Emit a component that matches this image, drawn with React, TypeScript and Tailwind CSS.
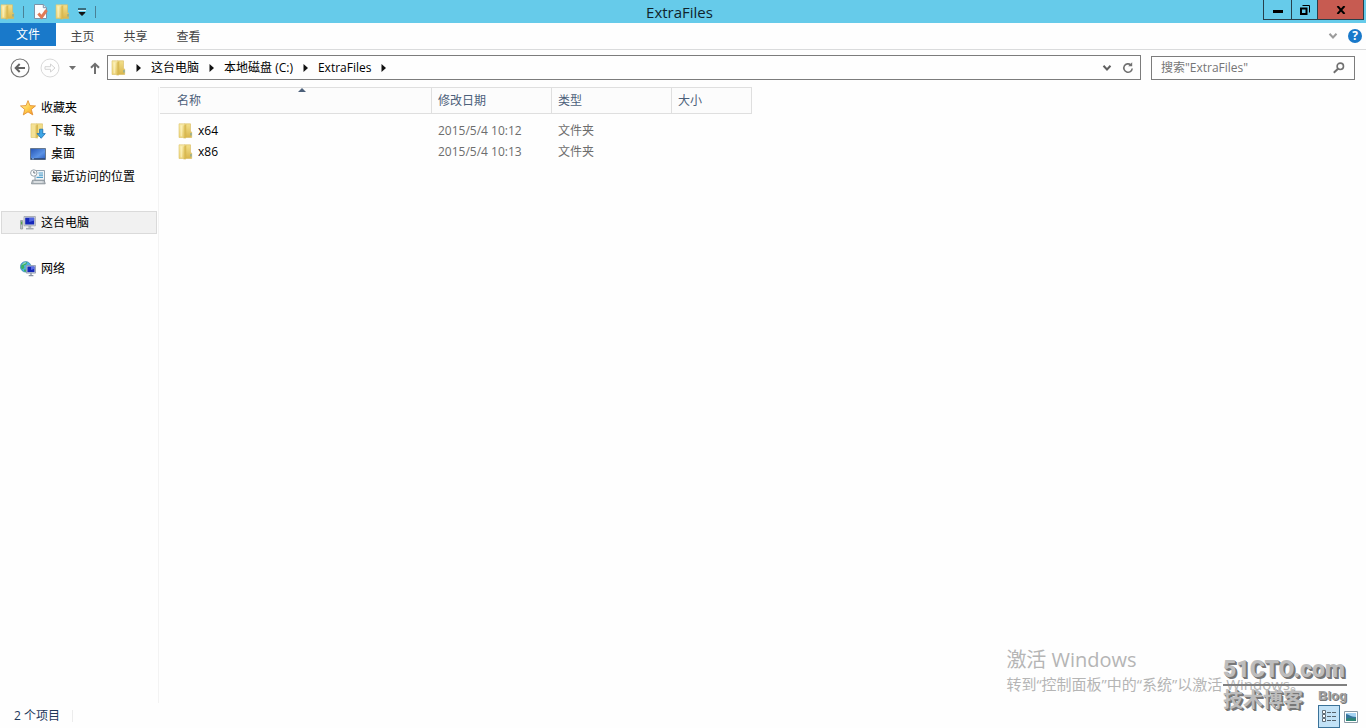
import type { ReactNode } from "react";

/* ---------- icons ---------- */

function FolderIcon({ id }: { id: string }) {
  return (
    <svg width="15" height="16" viewBox="0 0 15 16" aria-hidden="true" className="shrink-0">
      <defs>
        <linearGradient id={`${id}-back`} x1="0" y1="0" x2="0" y2="1">
          <stop offset="0" stopColor="#f8eba8" />
          <stop offset="1" stopColor="#ecd277" />
        </linearGradient>
        <linearGradient id={`${id}-front`} x1="0" y1="0" x2="0" y2="1">
          <stop offset="0" stopColor="#f3e08c" />
          <stop offset="1" stopColor="#d9b64c" />
        </linearGradient>
      </defs>
      <path d="M6 .8h6.500v7.700l1.200.6v5.400H6z" fill={`url(#${id}-front)`} stroke="#d8bb62" strokeWidth=".6" />
      <path d="M1 .8h4.500l2 1v13.400L5.500 14.500H1z" fill={`url(#${id}-back)`} stroke="#dcc26a" strokeWidth=".6" />
      <path d="M5.600 2.400 8.300 1.300v13l-2.700 1.400z" fill="#d3b144" opacity=".65" />
      <path d="M3.300 2.400v11" stroke="#fff6c8" strokeWidth="1.600" opacity=".6" />
      <path d="M13 10v2.600" stroke="#5c9fb5" strokeWidth=".9" />
    </svg>
  );
}

function PropertiesIcon() {
  return (
    <svg width="16" height="17" viewBox="0 0 16 17" aria-hidden="true">
      <path d="M1.500 1.500h8.800l3.200 3.200v10.800h-12z" fill="#fcfdff" stroke="#7d93a8" />
      <path d="M10.300 1.500v3.200h3.200" fill="#dfe8f0" stroke="#7d93a8" />
      <path d="m5.400 10.600 3.200 3.600 5-7" fill="none" stroke="#e07a55" strokeWidth="3" />
    </svg>
  );
}

function StarIcon() {
  return (
    <svg width="16" height="16" viewBox="0 0 16 16" aria-hidden="true">
      <defs>
        <linearGradient id="star" x1="0" y1="0" x2="1" y2="1">
          <stop offset="0" stopColor="#fff3b0" />
          <stop offset=".5" stopColor="#ffd04f" />
          <stop offset="1" stopColor="#f58e22" />
        </linearGradient>
      </defs>
      <path
        d="m8 .6 2 5 5.500.3-4.200 3.500 1.500 5.500L8 11.900l-4.700 3 1.400-5.500L.5 5.900 6 5.600z"
        fill="url(#star)"
        stroke="#e08a2c"
        strokeWidth=".8"
        strokeLinejoin="round"
      />
    </svg>
  );
}

function DownloadsIcon() {
  return (
    <svg width="16" height="16" viewBox="0 0 16 16" aria-hidden="true">
      <path d="M6 .8h6.500v12.500H6z" fill="#f1dc86" stroke="#d8bb62" strokeWidth=".6" />
      <path d="M1 .8h4.500l2 1v13.400L5.500 14.500H1z" fill="#f4e196" stroke="#dcc26a" strokeWidth=".6" />
      <path d="M5.600 2.400 8 1.500v12.600l-2.400 1.400z" fill="#d3b144" opacity=".75" />
      <path d="M9.600 6.200h3.200v4.400h2.500l-4.100 4.700-4.100-4.700h2.500z" fill="#3ea6e6" stroke="#1a6fb4" strokeWidth=".8" />
    </svg>
  );
}

function DesktopIcon() {
  return (
    <svg width="16" height="16" viewBox="0 0 16 16" aria-hidden="true">
      <defs>
        <linearGradient id="desk" x1="0" y1="0" x2="1" y2="1">
          <stop offset="0" stopColor="#2453b5" />
          <stop offset=".6" stopColor="#5b93e6" />
          <stop offset="1" stopColor="#2a5cc0" />
        </linearGradient>
      </defs>
      <path d="M.5 2.500h15v11H.5z" fill="url(#desk)" stroke="#66788e" />
      <path d="M1 12.800h14" stroke="#2c4674" strokeWidth="1.200" />
      <path d="M2 12.800h2" stroke="#8fb9ee" />
    </svg>
  );
}

function RecentIcon() {
  return (
    <svg width="16" height="16" viewBox="0 0 16 16" aria-hidden="true">
      <path d="M5 1.500h9.500v10H5z" fill="#eef3f7" stroke="#8a99a6" strokeWidth=".9" />
      <path d="M8.500 4h4.500M9 6.200h4M6.500 8.400H13" stroke="#4f9fcb" strokeWidth="1.200" />
      <path d="m2.500 11.200-1 3.600h13.700l-1-3.600z" fill="#bfc6cb" stroke="#838c93" strokeWidth=".9" />
      <path d="M4 13h8.500" stroke="#f1f3f4" />
      <circle cx="3.800" cy="4" r="3.200" fill="#fbfcfd" stroke="#8f9aa3" strokeWidth=".9" />
      <path d="M3.800 2.100V4h1.600" fill="none" stroke="#5b6770" strokeWidth=".9" />
    </svg>
  );
}

function ComputerIcon() {
  return (
    <svg width="16" height="16" viewBox="0 0 16 16" aria-hidden="true">
      <path d="M.6 5.500h2v8.500h-2z" fill="#c5cacd" stroke="#858c90" strokeWidth=".7" />
      <path d="M1 6.500h1.200v3H1z" fill="#53a34c" />
      <path d="M4 1.500h11.400v9.300H4z" fill="#d6dade" stroke="#9ba1a8" strokeWidth=".8" />
      <path d="M5.200 2.700h9v6.800h-9z" fill="#1527b9" />
      <path d="M9.200 2.700h5v2.800l-5 1.600z" fill="#6178ed" opacity=".75" />
      <path d="M8.400 10.800h2.800v2H8.400z" fill="#aab0b6" />
      <path d="M6 13.700h7.600" stroke="#a4aab0" strokeWidth="1.500" />
    </svg>
  );
}

function NetworkIcon() {
  return (
    <svg width="16" height="16" viewBox="0 0 16 16" aria-hidden="true">
      <circle cx="5.700" cy="5.800" r="5.300" fill="#4db3df" stroke="#2b79a9" strokeWidth=".6" />
      <path d="M1.400 4.300C2.800 1.900 5.200.9 7.400 1.300L6.200 3.600 3.900 4.500 4.400 7 2 8.600C.9 7.400.9 5.600 1.400 4.300zM4.300 8.200l2.200.6-.6 2.100-2-.7z" fill="#3bb062" />
      <path d="M2.800 3.500c.9-1.100 1.900-1.600 2.900-1.700" stroke="#d5f5ee" fill="none" />
      <path d="M6.400 4.500h9.100v7.600H6.400z" fill="#cdd4df" stroke="#8995a8" strokeWidth=".8" />
      <path d="M7.400 5.500h7.100v5.600H7.400z" fill="#1527b9" />
      <path d="M11 5.500h3.500v2.300L11 9z" fill="#6b80ef" opacity=".8" />
      <path d="M11 12v2M8.700 14.600h4.700" stroke="#8792a2" strokeWidth="1.300" />
    </svg>
  );
}

function BackIcon() {
  return (
    <svg width="20" height="20" viewBox="0 0 20 20" fill="none" aria-hidden="true">
      <circle cx="10" cy="10" r="9" stroke="#747474" strokeWidth="1.200" />
      <path d="M15 10H6M9.700 6 5.700 10l4 4" stroke="#626262" strokeWidth="2" />
    </svg>
  );
}

function ForwardIcon() {
  return (
    <svg width="20" height="20" viewBox="0 0 20 20" fill="none" aria-hidden="true">
      <circle cx="10" cy="10" r="9" stroke="#d9d9d9" />
      <path d="M5 8.700h5.500V6l4.500 4-4.500 4v-2.700H5z" stroke="#d3d3d3" />
    </svg>
  );
}

function Chevron({ color }: { color: string }) {
  return (
    <svg width="10" height="8" viewBox="0 0 10 8" fill="none" aria-hidden="true">
      <path d="m1.500 1.800 3.500 3.700 3.500-3.700" stroke={color} strokeWidth="2" />
    </svg>
  );
}

function CrumbArrow() {
  return (
    <svg width="5" height="8" viewBox="0 0 5 8" aria-hidden="true" className="shrink-0">
      <path d="M.5 0 5 4 .5 8z" fill="#111" />
    </svg>
  );
}

/* ---------- data ---------- */

type NavEntry = { label: string; icon: ReactNode; nested?: boolean; selected?: boolean };

const NAV_GROUPS: NavEntry[][] = [
  [
    { label: "收藏夹", icon: <StarIcon /> },
    { label: "下载", icon: <DownloadsIcon />, nested: true },
    { label: "桌面", icon: <DesktopIcon />, nested: true },
    { label: "最近访问的位置", icon: <RecentIcon />, nested: true },
  ],
  [{ label: "这台电脑", icon: <ComputerIcon />, selected: true }],
  [{ label: "网络", icon: <NetworkIcon /> }],
];

const CRUMBS = ["这台电脑", "本地磁盘 (C:)", "ExtraFiles"];

const FILES = [
  { name: "x64", modified: "2015/5/4 10:12", type: "文件夹" },
  { name: "x86", modified: "2015/5/4 10:13", type: "文件夹" },
];

/* ---------- sections ---------- */

function TitleBar() {
  return (
    <header className="flex h-[23px] items-start bg-[#66cbea]">
      <div className="flex h-full items-center">
        <FolderIcon id="title" />
        <span className="ml-2 h-3 w-px bg-[#4a8196]" />
        <button aria-label="属性" className="ml-[9px]">
          <PropertiesIcon />
        </button>
        <button aria-label="新建文件夹" className="ml-1.5">
          <FolderIcon id="new" />
        </button>
        <button aria-label="自定义快速访问工具栏" className="ml-2">
          <svg width="8" height="8" viewBox="0 0 8 8" aria-hidden="true">
            <path d="M0 1h8M1 4.500h6L4 7.500z" stroke="#111" strokeWidth="1" fill="#111" />
            <path d="M0 2.500h8" stroke="#d9f2fa" />
          </svg>
        </button>
        <span className="ml-[9px] h-3 w-px bg-[#4a8196]" />
      </div>
      <h1 className="flex-1 text-center text-[15px] leading-6 text-[#10242c]">ExtraFiles</h1>
      <div className="mr-0.5 flex h-5 border-x border-b border-[#27404c]">
        <button aria-label="最小化" className="flex w-7 items-center justify-center border-r border-[#27404c]">
          <span className="mt-1 h-[3px] w-2.5 bg-black" />
        </button>
        <button aria-label="还原" className="flex w-[26px] items-center justify-center border-r border-[#27404c]">
          <svg width="10" height="10" viewBox="0 0 10 10" fill="none" aria-hidden="true">
            <path d="M1 3.500h5.500V9H1z" stroke="#000" strokeWidth="2" />
            <path d="M2.500.5h7v7" stroke="#000" />
          </svg>
        </button>
        <button aria-label="关闭" className="flex w-[45px] items-center justify-center bg-[#c75b51]">
          <svg width="10" height="8" viewBox="0 0 10 8" aria-hidden="true">
            <path d="m1.500 0 7 8M8.500 0l-7 8" stroke="#000" strokeWidth="2" />
          </svg>
        </button>
      </div>
    </header>
  );
}

function RibbonTabs() {
  return (
    <div className="flex h-[27px] items-start border-b border-[#dadbdc]">
      <button className="h-[23px] w-14 bg-[#1979ca] text-white">文件</button>
      {["主页", "共享", "查看"].map((tab) => (
        <button key={tab} className="h-[26px] w-[53px] pt-0.5 text-[#444]">
          {tab}
        </button>
      ))}
      <div className="ml-auto flex h-[26px] items-center gap-2.5 pr-1">
        <button aria-label="展开功能区">
          <Chevron color="#9b9b9b" />
        </button>
        <button
          aria-label="帮助"
          className="flex size-3.5 items-center justify-center rounded-full bg-[#1979ca] text-xs font-bold leading-none text-white"
        >
          ?
        </button>
      </div>
    </div>
  );
}

function AddressRow() {
  return (
    <div className="flex items-center pt-[5px] pr-[11px] pb-[7px] pl-2.5">
      <button aria-label="后退">
        <BackIcon />
      </button>
      <button aria-label="前进" className="ml-2.5">
        <ForwardIcon />
      </button>
      <button aria-label="最近浏览的位置" className="ml-[9px]">
        <svg width="7" height="4" viewBox="0 0 7 4" aria-hidden="true">
          <path d="M0 0h7L3.500 4z" fill="#707070" />
        </svg>
      </button>
      <button aria-label="上移" className="ml-3.5">
        <svg width="10" height="12" viewBox="0 0 10 12" fill="none" aria-hidden="true">
          <path d="M5 12V2M1 5.800 5 1.800l4 4" stroke="#707070" strokeWidth="2" />
        </svg>
      </button>
      <div className="ml-[7px] flex h-[25px] flex-1 items-center border border-[#7c7c7c] pr-1.5 pl-[3px]">
        <nav aria-label="地址" className="flex items-center gap-2.5">
          <FolderIcon id="address" />
          <CrumbArrow />
          {CRUMBS.map((crumb) => (
            <span key={crumb} className="flex items-center gap-2.5">
              <button>{crumb}</button>
              <CrumbArrow />
            </span>
          ))}
        </nav>
        <button aria-label="以前的位置" className="ml-auto">
          <Chevron color="#606060" />
        </button>
        <button aria-label="刷新" className="ml-2.5">
          <svg width="12" height="12" viewBox="0 0 12 12" fill="none" aria-hidden="true">
            <path d="M8.800 2.900A4.200 4.200 0 1 0 10.200 6.500" stroke="#707070" strokeWidth="1.600" />
            <path d="M6.200 4.300h4V.3z" fill="#707070" />
          </svg>
        </button>
      </div>
      <label className="ml-2.5 flex h-6 w-[204px] items-center border border-[#7c7c7c] px-[9px]">
        <input
          type="search"
          aria-label="搜索"
          placeholder={'搜索"ExtraFiles"'}
          className="min-w-0 flex-1 outline-none placeholder:text-[#757575]"
        />
        <svg width="12" height="12" viewBox="0 0 12 12" fill="none" aria-hidden="true">
          <circle cx="7.300" cy="4.300" r="3.200" stroke="#707070" strokeWidth="1.600" />
          <path d="M5 6.700.8 10.800" stroke="#707070" strokeWidth="2" />
        </svg>
      </label>
    </div>
  );
}

function NavPane() {
  return (
    <aside className="w-[159px] shrink-0 border-r border-[#f3f3f3] pt-[9px] pr-px pl-px">
      {NAV_GROUPS.map((group, i) => (
        <ul key={i} className="mb-[23px]">
          {group.map((entry) => (
            <li key={entry.label}>
              <a
                href="#"
                className={`flex h-[23px] items-center gap-[5px] border ${entry.nested ? "pl-7" : "pl-[18px]"} ${
                  entry.selected ? "border-[#dadada] bg-[#f1f1f1]" : "border-transparent"
                }`}
              >
                {entry.icon}
                {entry.label}
              </a>
            </li>
          ))}
        </ul>
      ))}
    </aside>
  );
}

function FileList() {
  return (
    <main className="flex-1 pl-px">
      <table className="table-fixed border-separate border-spacing-0 text-left">
        <thead className="text-[#4c607a]">
          <tr className="h-[27px] *:border-y *:border-r *:border-[#dfdfdf] *:bg-[#fcfcfc] *:p-0 *:font-normal">
            <th className="relative w-[272px]">
              <button className="pl-[17px]">名称</button>
              <svg
                width="8"
                height="4"
                viewBox="0 0 8 4"
                aria-hidden="true"
                className="absolute top-0 left-1/2 ml-0.5"
              >
                <path d="M0 4h8L4 0z" fill="#4c607a" />
              </svg>
            </th>
            <th className="w-[120px]">
              <button className="pl-1.5">修改日期</button>
            </th>
            <th className="w-[120px]">
              <button className="pl-1.5">类型</button>
            </th>
            <th className="w-20">
              <button className="pl-1.5">大小</button>
            </th>
          </tr>
        </thead>
        <tbody className="text-[#6d6d6d] before:block before:h-1.5 before:content-['']">
          {FILES.map((file) => (
            <tr key={file.name} className="h-[21px] *:p-0">
              <td>
                <span className="flex items-center gap-[5px] pl-[18px] text-black">
                  <FolderIcon id={file.name} />
                  {file.name}
                </span>
              </td>
              <td>
                <span className="pl-1.5">{file.modified}</span>
              </td>
              <td>
                <span className="pl-1.5">{file.type}</span>
              </td>
              <td />
            </tr>
          ))}
        </tbody>
      </table>
    </main>
  );
}

function StatusBar() {
  return (
    <footer className="flex h-[25px] items-center text-[#1e395b]">
      <span className="pl-3.5">2 个项目</span>
      <span className="ml-3 h-3 w-px bg-[#ececec]" />
      <div className="ml-auto flex items-center self-end pr-2">
        <button
          aria-label="详细信息"
          className="flex h-[23px] w-[22px] items-center justify-center border border-[#3a7299] bg-[#c2e2f7]"
        >
          <svg width="16" height="14" viewBox="0 0 16 14" fill="none" aria-hidden="true">
            <path
              d="M1.500.5h3v3h-3zM1.500 4.500h3v3h-3zM1.500 8.500h3v3h-3z"
              fill="#fff"
              stroke="#5f6d78"
            />
            <path d="M6 2.500h4M11 2.500h4M6 6.500h4M11 6.500h4M6 10.500h4M11 10.500h4" stroke="#56636d" />
          </svg>
        </button>
        <button aria-label="大图标" className="ml-1">
          <svg width="14" height="12" viewBox="0 0 14 12" aria-hidden="true">
            <path d="M.5.5h13v11H.5z" fill="#fff" stroke="#8b9aa6" />
            <path d="M2 2h10v8H2z" fill="#a5d3f3" />
            <path d="M2 3c3 0 4 3 10 3v4H2z" fill="#35749b" />
            <path d="M2 8c4-2 6 0 10-1v3H2z" fill="#2f8577" />
          </svg>
        </button>
      </div>
    </footer>
  );
}

/* Activation notice and blog mark float over the window. */
function Watermarks() {
  return (
    <>
      <div className="pointer-events-none absolute right-[61px] bottom-8 text-[#b5b5b5]">
        <p className="text-xl leading-6">激活 Windows</p>
        <p className="text-[15px] leading-6">转到“控制面板”中的“系统”以激活 Windows。</p>
      </div>
      <div className="pointer-events-none absolute right-[19px] bottom-3.5 w-[124px] font-bold text-[#bdbdbd] [text-shadow:1px_1px_0_#777,2px_2px_0_#777]">
        <p className="border-b-2 border-[#808080] font-['Roboto',sans-serif] text-[23px] font-black leading-7">
          51CTO.com
        </p>
        <div className="flex justify-between">
          <span className="text-xl leading-7">技术博客</span>
          <span className="font-['Liberation_Sans',sans-serif] text-[13px] leading-5 text-[#a0a0a0] [text-shadow:1px_1px_0_#777]">
            Blog
          </span>
        </div>
      </div>
    </>
  );
}

export default function App() {
  return (
    <div className="relative flex min-h-screen flex-col overflow-hidden bg-[#fefefe] font-['Open_Sans','Noto_Sans_CJK_SC',sans-serif] text-xs text-black">
      <TitleBar />
      <RibbonTabs />
      <AddressRow />
      <div className="flex flex-1">
        <NavPane />
        <FileList />
      </div>
      <StatusBar />
      <Watermarks />
    </div>
  );
}
